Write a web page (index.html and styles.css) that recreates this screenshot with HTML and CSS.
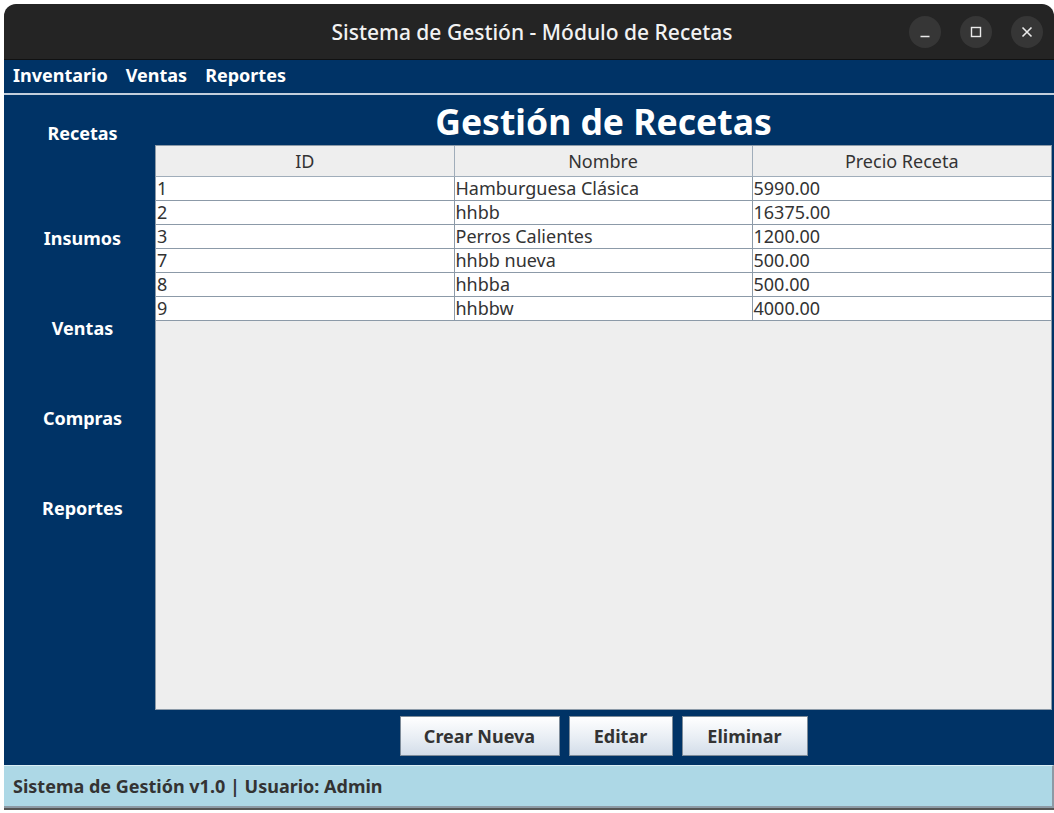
FILE: index.html
```html
<!DOCTYPE html>
<html lang="es">
<head>
<meta charset="utf-8">
<title>Sistema de Gestión - Módulo de Recetas</title>
<link rel="stylesheet" href="styles.css">
</head>
<body>
<div class="window">
  <header class="titlebar">
    <div class="title">Sistema de Gestión - Módulo de Recetas</div>
    <div class="controls">
      <span class="ctl"><svg width="12" height="12" viewBox="0 0 12 12"><path d="M1.5 10.5h9" stroke="#eaeaea" stroke-width="1.6" fill="none"/></svg></span>
      <span class="ctl"><svg width="12" height="12" viewBox="0 0 12 12"><rect x="1.5" y="1.5" width="9" height="9" stroke="#eaeaea" stroke-width="1.4" fill="none"/></svg></span>
      <span class="ctl"><svg width="12" height="12" viewBox="0 0 12 12"><path d="M1.5 1.5l9 9M10.5 1.5l-9 9" stroke="#eaeaea" stroke-width="1.6" fill="none"/></svg></span>
    </div>
  </header>
  <nav class="menubar">
    <span class="menu-item">Inventario</span>
    <span class="menu-item">Ventas</span>
    <span class="menu-item">Reportes</span>
  </nav>
  <div class="main">
    <aside class="sidebar">
      <div class="side-item first">Recetas</div>
      <div class="side-item">Insumos</div>
      <div class="side-item">Ventas</div>
      <div class="side-item">Compras</div>
      <div class="side-item">Reportes</div>
    </aside>
    <section class="content">
      <h1 class="heading">Gestión de Recetas</h1>
      <div class="table-wrap">
        <table class="grid">
          <thead>
            <tr><th>ID</th><th>Nombre</th><th>Precio Receta</th></tr>
          </thead>
          <tbody>
            <tr><td>1</td><td>Hamburguesa Clásica</td><td>5990.00</td></tr>
            <tr><td>2</td><td>hhbb</td><td>16375.00</td></tr>
            <tr><td>3</td><td>Perros Calientes</td><td>1200.00</td></tr>
            <tr><td>7</td><td>hhbb nueva</td><td>500.00</td></tr>
            <tr><td>8</td><td>hhbba</td><td>500.00</td></tr>
            <tr><td>9</td><td>hhbbw</td><td>4000.00</td></tr>
          </tbody>
        </table>
      </div>
      <div class="actions">
        <button class="btn btn-create">Crear Nueva</button>
        <button class="btn btn-edit">Editar</button>
        <button class="btn btn-delete">Eliminar</button>
      </div>
    </section>
  </div>
  <footer class="statusbar">Sistema de Gestión v1.0 | Usuario: Admin</footer>
</div>
</body>
</html>
```
FILE: styles.css
```css
* { box-sizing: border-box; }
html, body { margin: 0; padding: 0; }
body {
  background: #ffffff;
  font-family: "Noto Sans", "Open Sans", "DejaVu Sans", sans-serif;
  width: 1054px;
  height: 813px;
  overflow: hidden;
}
.window {
  margin: 4px 0 0 4px;
  width: 1050px;
  border-radius: 12px 12px 0 0;
  overflow: hidden;
  border-bottom: 2px solid #555;
}
.titlebar {
  height: 56px;
  background: #242424;
  border-bottom: 1px solid #111;
  display: flex;
  align-items: center;
  justify-content: center;
  position: relative;
}
.title {
  color: #f2f2f2;
  font-size: 21px;
  font-weight: 500;
  margin-left: 6px;
}
.controls {
  position: absolute;
  right: 11px;
  top: 12px;
  display: flex;
  gap: 19px;
}
.ctl {
  width: 32px;
  height: 32px;
  border-radius: 50%;
  background: #363636;
  display: flex;
  align-items: center;
  justify-content: center;
}
.menubar {
  height: 35px;
  background: #003366;
  display: flex;
  align-items: center;
  gap: 18px;
  padding: 0 0 3px 9px;
  border-bottom: 2px solid #c3cfdc;
}
.menu-item {
  color: #ffffff;
  font-weight: 700;
  font-size: 18px;
}
.main {
  display: flex;
  background: #003366;
  height: 670px;
}
.sidebar {
  width: 151px;
  padding-left: 6px;
  display: flex;
  flex-direction: column;
  align-items: center;
  gap: 66px;
  padding-top: 26px;
}
.side-item {
  color: #ffffff;
  font-weight: 700;
  font-size: 18px;
  line-height: 24px;
}
.side-item.first { margin-bottom: 15px; }
.content {
  flex: 1;
  display: flex;
  flex-direction: column;
  padding-right: 2px;
}
.heading {
  margin: 0;
  height: 50px;
  color: #ffffff;
  font-size: 35.5px;
  font-weight: 700;
  text-align: center;
  line-height: 52px;
}
.table-wrap {
  height: 565px;
  background: #eeeeee;
  border: 1px solid #8c9aa8;
}
.grid {
  width: 100%;
  border-collapse: collapse;
  table-layout: fixed;
  font-size: 18px;
  color: #333333;
}
.grid th {
  height: 30px;
  font-weight: 400;
  background: #eeeeee;
  border-right: 1px solid #a0adba;
  border-bottom: 1px solid #a0adba;
  padding: 0;
  text-align: center;
  line-height: 28px;
}
.grid th:first-child, .grid td:first-child { width: 298px; }
.grid th:nth-child(2), .grid td:nth-child(2) { width: 298px; }
.grid th:last-child, .grid td:last-child { border-right: none; }
.grid td {
  height: 24px;
  background: #ffffff;
  border-right: 1px solid #8c9aa8;
  border-bottom: 1px solid #8c9aa8;
  padding: 0 0 0 1px;
  line-height: 22px;
  white-space: nowrap;
}
.actions {
  flex: 1;
  display: flex;
  justify-content: center;
  align-items: center;
  gap: 9px;
  padding-bottom: 3px;
}
.btn {
  height: 40px;
  font-family: inherit;
  font-size: 18px;
  font-weight: 700;
  color: #333333;
  border: 1px solid #7d8b99;
  background: linear-gradient(#ffffff, #e6ecf3 60%, #d3dde9);
  padding: 0;
}
.btn-create { width: 160px; }
.btn-edit { width: 104px; }
.btn-delete { width: 126px; }
.statusbar {
  height: 43px;
  background: #add8e6;
  border-top: 1px solid #d9eef5;
  border-bottom: 2px solid #8c9aa5;
  border-right: 2px solid #8c9aa5;
  color: #333333;
  font-weight: 700;
  font-size: 18px;
  padding-left: 9px;
  display: flex;
  align-items: center;
}
```
